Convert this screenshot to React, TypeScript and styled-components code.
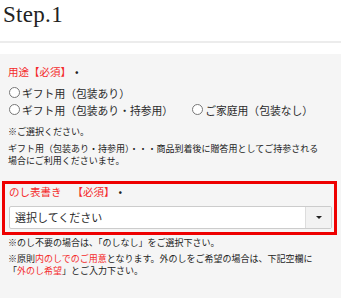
import styled, { createGlobalStyle } from "styled-components";

const GlobalStyle = createGlobalStyle`
  body {
    margin: 0;
    background: #ffffff;
    font-family: "Noto Sans CJK JP", "Noto Sans", sans-serif;
    color: #333333;
  }
`;

const RED = "#f42a2a";

const Page = styled.div`
  width: 341px;
  height: 302px;
  overflow: hidden;
`;

const StepTitle = styled.h2`
  margin: 0;
  height: 41px;
  padding-left: 3px;
  font-family: "Liberation Serif", serif;
  font-weight: normal;
  font-size: 23px;
  line-height: 30px;
  color: #222222;
  letter-spacing: 0.3px;
`;

const Rule = styled.div`
  height: 2px;
  background: #ececec;
`;

const Panel = styled.div`
  margin-top: 11px;
  height: 244px;
  background: #f5f5f5;
  padding: 11px 4px 0 2px;
  box-sizing: border-box;
`;

const Section = styled.div`
  padding-left: 6px;
`;

const Label = styled.div`
  font-size: 10.5px;
  line-height: 14px;
  color: ${RED};
  white-space: nowrap;
`;

const Required = styled.span<{ $gap?: number }>`
  margin-left: ${(p) => p.$gap ?? 0}px;
`;

const Dot = styled.span`
  color: #222222;
  margin-left: 4px;
`;

const RadioGroup = styled.div`
  margin-top: 5px;
  display: flex;
  flex-wrap: wrap;
  width: 320px;
`;

const RadioItem = styled.label<{ $gap?: number }>`
  display: flex;
  align-items: center;
  height: 17px;
  font-size: 10.8px;
  color: #2a2a2a;
  margin-right: ${(p) => p.$gap ?? 0}px;
  white-space: nowrap;
`;

const RadioBreak = styled.div`
  flex-basis: 100%;
  height: 0;
`;

const Circle = styled.span`
  width: 11px;
  height: 11px;
  border: 1px solid #777777;
  border-radius: 50%;
  background: #ffffff;
  margin: 0 2px 0 1px;
  box-sizing: border-box;
  flex-shrink: 0;
`;

const Note = styled.p<{ $top: number }>`
  margin: ${(p) => p.$top}px 0 0;
  font-size: 9px;
  line-height: 12px;
  color: #222222;
`;

const Em = styled.span`
  color: ${RED};
`;

const RequiredBox = styled.div`
  margin-top: 14px;
  border: 3px solid #ee0000;
  padding: 1px 2px 3px 4px;
`;

const Select = styled.div`
  margin-top: 7px;
  display: flex;
  height: 23px;
  background: #ffffff;
  border: 1px solid #cccccc;
  border-radius: 2px;
  box-sizing: border-box;
`;

const SelectText = styled.div`
  flex: 1;
  padding-left: 5px;
  font-size: 11px;
  line-height: 21px;
  color: #2a2a2a;
`;

const SelectButton = styled.div`
  width: 25px;
  border-left: 1px solid #dddddd;
  background: #f2f2f2;
  display: flex;
  align-items: center;
  justify-content: center;
`;

const Caret = styled.span`
  width: 0;
  height: 0;
  border-left: 3px solid transparent;
  border-right: 3px solid transparent;
  border-top: 3px solid #222222;
`;

export default function App() {
  return (
    <Page>
      <GlobalStyle />
      <StepTitle>Step.1</StepTitle>
      <Rule />
      <Panel>
        <Section>
          <Label>
            用途<Required>【必須】</Required>
            <Dot>•</Dot>
          </Label>
          <RadioGroup>
            <RadioItem>
              <Circle />
              ギフト用（包装あり）
            </RadioItem>
            <RadioBreak />
            <RadioItem $gap={18}>
              <Circle />
              ギフト用（包装あり・持参用）
            </RadioItem>
            <RadioItem>
              <Circle />
              ご家庭用（包装なし）
            </RadioItem>
          </RadioGroup>
          <Note $top={8}>※ご選択ください。</Note>
          <Note $top={5}>
            ギフト用（包装あり・持参用）・・・商品到着後に贈答用としてご持参される
            <br />
            場合にご利用くださいませ。
          </Note>
        </Section>
        <RequiredBox>
          <Label>
            のし表書き<Required $gap={11}>【必須】</Required>
            <Dot>•</Dot>
          </Label>
          <Select>
            <SelectText>選択してください</SelectText>
            <SelectButton>
              <Caret />
            </SelectButton>
          </Select>
        </RequiredBox>
        <Section>
          <Note $top={2}>※のし不要の場合は、「のしなし」をご選択下さい。</Note>
          <Note $top={4}>
            ※原則<Em>内のしでのご用意</Em>となります。外のしをご希望の場合は、下記空欄に
            <br />「<Em>外のし希望</Em>」とご入力下さい。
          </Note>
        </Section>
      </Panel>
    </Page>
  );
}
